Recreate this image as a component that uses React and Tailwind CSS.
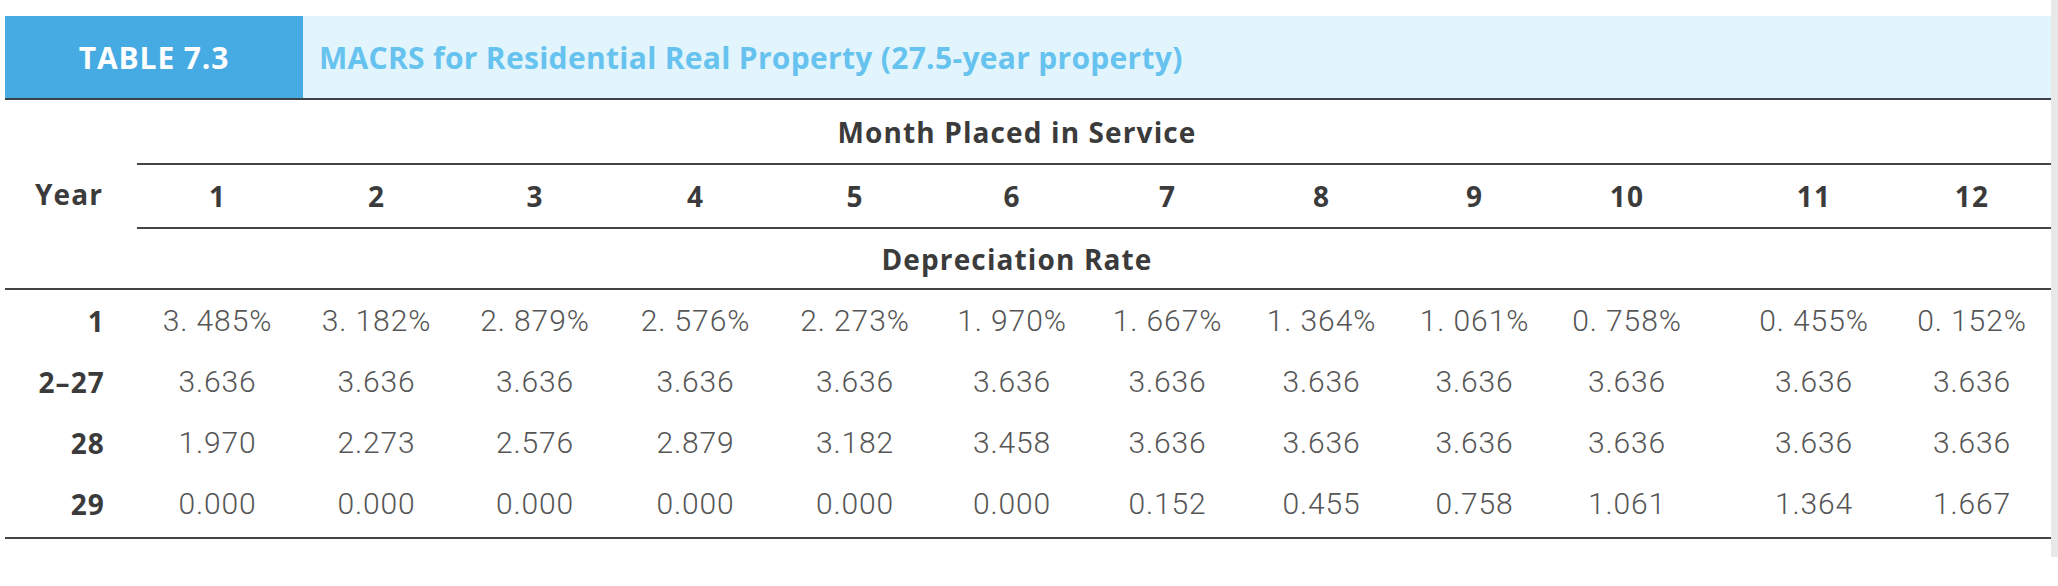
const COLS = [
  'w-[161px]', 'w-[157px]', 'w-[160px]', 'w-[161px]', 'w-[158px]', 'w-[156px]',
  'w-[155px]', 'w-[153px]', 'w-[153px]', 'w-[169px] pr-[17px]', 'w-[173px] pl-[15px]', 'w-[158px]',
]

const ROWS = [
  { year: '1', vals: ['3. 485%', '3. 182%', '2. 879%', '2. 576%', '2. 273%', '1. 970%', '1. 667%', '1. 364%', '1. 061%', '0. 758%', '0. 455%', '0. 152%'] },
  { year: '2–27', vals: ['3.636', '3.636', '3.636', '3.636', '3.636', '3.636', '3.636', '3.636', '3.636', '3.636', '3.636', '3.636'] },
  { year: '28', vals: ['1.970', '2.273', '2.576', '2.879', '3.182', '3.458', '3.636', '3.636', '3.636', '3.636', '3.636', '3.636'] },
  { year: '29', vals: ['0.000', '0.000', '0.000', '0.000', '0.000', '0.000', '0.152', '0.455', '0.758', '1.061', '1.364', '1.667'] },
]

const bold = "font-['Open_Sans',sans-serif] font-bold text-[#3b3b3b] text-[28px] tracking-[0.04em]"
const num = "font-['Roboto',sans-serif] font-light text-[#555555] text-[30px] tracking-[0.03em]"

export default function App() {
  return (
    <div className="flex w-[2058px] h-[586px] bg-white">
      <div className="w-[2051px] pt-[16px] pl-[5px]">
        {/* Title bar */}
        <div className="flex h-[84px] border-b-2 border-[#3c4348]">
          <div className="w-[298px] flex items-center justify-center bg-[#46aae3] font-['Open_Sans',sans-serif] font-bold text-white text-[30px] tracking-[0.03em]">
            TABLE 7.3
          </div>
          <div className="flex-1 flex items-center pl-[16px] bg-[#e3f5fc] font-['Open_Sans',sans-serif] font-bold text-[#66c2ee] text-[30px] tracking-[0.01em]">
            MACRS for Residential Real Property (27.5-year property)
          </div>
        </div>

        {/* Column headers */}
        <div className="flex border-b-2 border-[#444]">
          <div className={`w-[132px] flex items-center justify-end pr-[34px] ${bold}`}>Year</div>
          <div className="flex-1 flex flex-col">
            <div className={`h-[65px] flex items-center justify-center pr-[154px] border-b-2 border-[#444] ${bold}`}>
              Month Placed in Service
            </div>
            <div className="h-[64px] flex border-b-2 border-[#444]">
              {COLS.map((c, i) => (
                <div key={i} className={`${c} flex items-center justify-center ${bold}`}>{i + 1}</div>
              ))}
            </div>
            <div className={`h-[59px] flex items-center justify-center pr-[154px] ${bold}`}>
              Depreciation Rate
            </div>
          </div>
        </div>

        {/* Data */}
        <div className="pb-[3px] border-b-2 border-[#444]">
          {ROWS.map(row => (
            <div key={row.year} className="h-[61px] flex">
              <div className={`w-[132px] flex items-center justify-end pr-[32px] ${bold}`}>{row.year}</div>
              {row.vals.map((v, i) => (
                <div key={i} className={`${COLS[i]} flex items-center justify-center whitespace-pre ${num}`}>{v}</div>
              ))}
            </div>
          ))}
        </div>
      </div>
      <div className="w-[7px] h-[557px] bg-[#e8e8e8]" />
    </div>
  )
}
